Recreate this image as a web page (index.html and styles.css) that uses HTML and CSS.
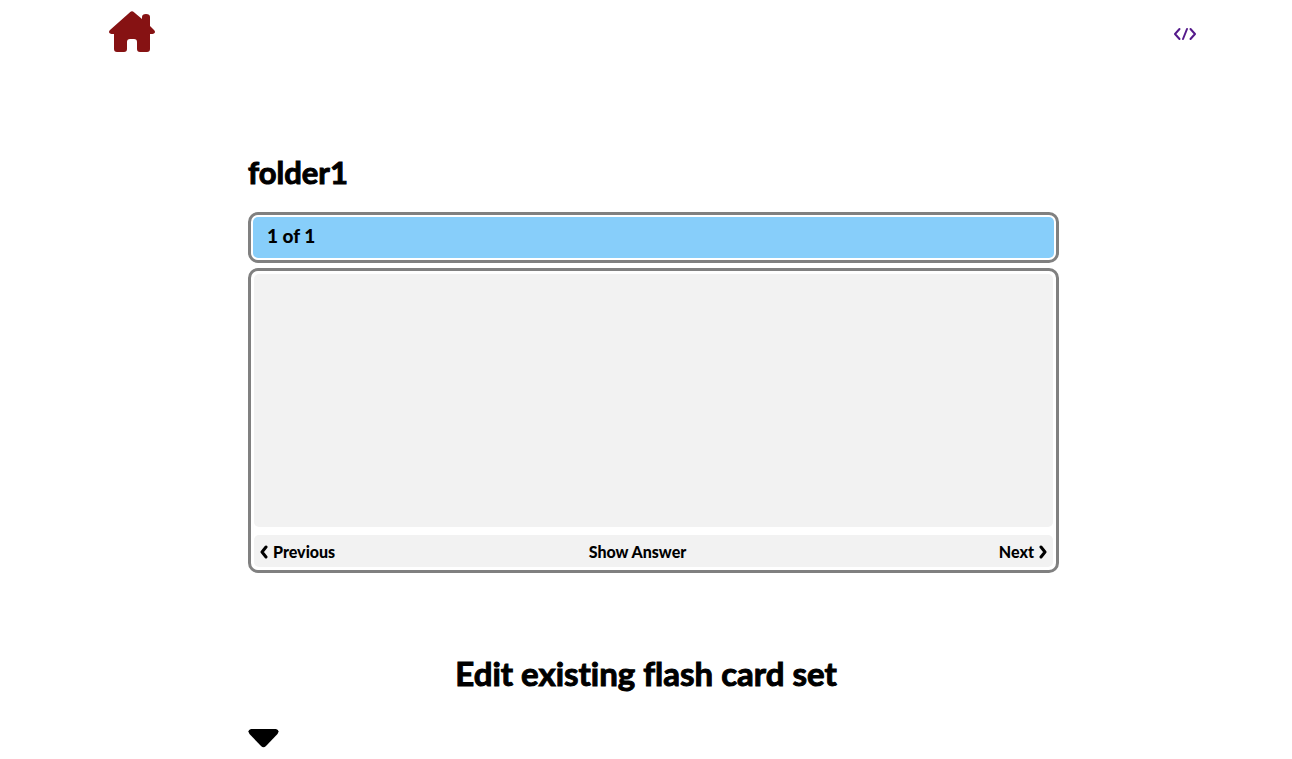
FILE: index.html
```html
<!DOCTYPE html>
<html lang="en">
<head>
<meta charset="utf-8">
<meta name="viewport" content="width=device-width, initial-scale=1">
<title>folder1</title>
<link rel="stylesheet" href="styles.css">
</head>
<body>
<header class="top">
  <a class="home" href="#" aria-label="Home">
    <svg width="46" height="42" viewBox="0 0 46 42"><path d="M21 1.200Q23 -.8 25 1.200L33 8V6Q33 3 37 3Q41 3 41 6V15L45 19Q47 21 45 22.500Q44 23 41 23V38Q41 41 38 41H31Q28 41 28 38V31Q28 28 25 28H21Q18 28 18 31V38Q18 41 15 41H8Q5 41 5 38V23Q2 23 1 22.500Q-1 21 1 19Z"/></svg>
  </a>
  <a class="source" href="#" aria-label="Source code">
    <svg width="24" height="14" viewBox="0 0 24 14"><path d="M6.500 2L2 7L6.500 12M14 2L10 12M17.500 2L22 7L17.500 12"/></svg>
  </a>
</header>
<main class="content">
  <h1 class="title">folder1</h1>
  <section class="counter"><p class="count">1 of 1</p></section>
  <section class="card">
    <div class="question"></div>
    <div class="controls">
      <button class="control" type="button"><svg width="8" height="14" viewBox="0 0 8 14"><path d="M6 2L2 7L6 12"/></svg>Previous</button>
      <button class="control" type="button">Show Answer</button>
      <button class="control" type="button">Next<svg width="8" height="14" viewBox="0 0 8 14"><path d="M2 2L6 7L2 12"/></svg></button>
    </div>
  </section>
</main>
<section class="editor">
  <h2 class="heading">Edit existing flash card set</h2>
  <button class="expand" type="button" aria-label="Expand card editor"><svg width="31" height="20" viewBox="0 0 31 20"><path d="M3 1H28Q32 2 29.500 6L18 18Q15.500 20.500 13 18L1.500 6Q-1 2 3 1Z"/></svg></button>
</section>
</body>
</html>
```
FILE: styles.css
```css
* {
  box-sizing: border-box;
}

body {
  margin: 0;
  background: #fff;
  color: #000;
  font-family: Lato, "Open Sans", sans-serif;
  font-weight: 900;
  font-variant-ligatures: none;
}

svg {
  display: block;
  flex: none;
}

.top {
  display: flex;
  justify-content: space-between;
  align-items: center;
  padding: 11px 95px 0 109px;
}

.home {
  fill: #861213;
}

.source {
  padding-top: 4px;
}

.source,
.control svg {
  fill: none;
  stroke: #551a8b;
  stroke-width: 2;
  stroke-linecap: round;
  stroke-linejoin: round;
}

.content {
  margin: 98px 233px 0 248px;
}

.title {
  margin: 0 0 18px;
  font-size: 31px;
  line-height: 43px;
  -webkit-text-stroke: 1px #000;
}

.counter,
.card {
  border: 3px solid #808080;
  border-radius: 10px;
}

.counter {
  margin-bottom: 6px;
  padding: 2px;
}

.count {
  margin: 0;
  padding: 7px 14px 10px;
  border-radius: 5px;
  background: #87cefa;
  font-size: 19px;
  line-height: 24px;
}

.card {
  margin-top: -1px;
  padding: 3px;
}

.question {
  min-height: 253px;
  border-radius: 5px;
  background: #f2f2f2;
}

.controls {
  display: grid;
  grid-template-columns: 1fr auto 1fr;
  align-items: center;
  margin-top: 8px;
  padding: 7px 6px 5px;
  border-radius: 5px;
  background: #f2f2f2;
}

.control {
  display: flex;
  align-items: center;
  justify-self: start;
  gap: 5px;
  padding: 0;
  border: 0;
  background: none;
  color: #000;
  font: inherit;
  font-size: 16px;
  line-height: 20px;
}

.control:nth-child(2) {
  margin-right: 32px;
}

.control:last-child {
  justify-self: end;
}

.control svg {
  stroke: #000;
  stroke-width: 3;
}

.editor {
  padding: 78px 0 10px;
}

.heading {
  margin: 0 0 32px;
  font-size: 33px;
  line-height: 45px;
  text-align: center;
  -webkit-text-stroke: 1px #000;
}

.expand {
  display: block;
  margin-left: 248px;
  padding: 0;
  border: 0;
  background: none;
}
```
